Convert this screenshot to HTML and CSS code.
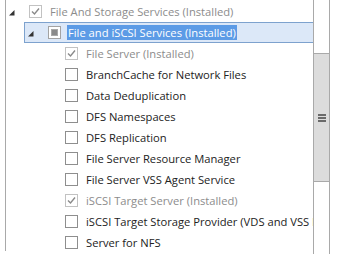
FILE: index.html
```html
<!doctype html>
<html lang="en">
  <head>
    <meta charset="UTF-8" />
    <title>Roles</title>
    <link rel="stylesheet" href="styles.css">
  </head>
  <body>
    <div class="panel">
      <div class="tree">
        <div class="row level-0">
          <span class="arrow"><svg width="6" height="6" viewBox="0 0 6 6"><polygon points="5.5,0 5.5,5.5 0,5.5" /></svg></span>
          <span class="box checked disabled"><svg width="11" height="11" viewBox="0 0 11 11"><polyline points="2,5.5 4.5,8 9,2.5" /></svg></span>
          <span class="label dim">File And Storage Services (Installed)</span>
        </div>
        <div class="row level-1 selected">
          <span class="arrow"><svg width="6" height="6" viewBox="0 0 6 6"><polygon points="5.5,0 5.5,5.5 0,5.5" /></svg></span>
          <span class="box mixed"><span class="fill"></span></span>
          <span class="label"><span class="highlight">File and iSCSI Services (Installed)</span></span>
        </div>
        <div class="row level-2">
          <span class="arrow"></span>
          <span class="box checked disabled"><svg width="11" height="11" viewBox="0 0 11 11"><polyline points="2,5.5 4.5,8 9,2.5" /></svg></span>
          <span class="label dim">File Server (Installed)</span>
        </div>
        <div class="row level-2">
          <span class="arrow"></span>
          <span class="box"></span>
          <span class="label">BranchCache for Network Files</span>
        </div>
        <div class="row level-2">
          <span class="arrow"></span>
          <span class="box"></span>
          <span class="label">Data Deduplication</span>
        </div>
        <div class="row level-2">
          <span class="arrow"></span>
          <span class="box"></span>
          <span class="label">DFS Namespaces</span>
        </div>
        <div class="row level-2">
          <span class="arrow"></span>
          <span class="box"></span>
          <span class="label">DFS Replication</span>
        </div>
        <div class="row level-2">
          <span class="arrow"></span>
          <span class="box"></span>
          <span class="label">File Server Resource Manager</span>
        </div>
        <div class="row level-2">
          <span class="arrow"></span>
          <span class="box"></span>
          <span class="label">File Server VSS Agent Service</span>
        </div>
        <div class="row level-2">
          <span class="arrow"></span>
          <span class="box checked disabled"><svg width="11" height="11" viewBox="0 0 11 11"><polyline points="2,5.5 4.5,8 9,2.5" /></svg></span>
          <span class="label dim">iSCSI Target Server (Installed)</span>
        </div>
        <div class="row level-2">
          <span class="arrow"></span>
          <span class="box"></span>
          <span class="label">iSCSI Target Storage Provider (VDS and VSS hardware providers)</span>
        </div>
        <div class="row level-2">
          <span class="arrow"></span>
          <span class="box"></span>
          <span class="label">Server for NFS</span>
        </div>
      </div>
      <div class="scrollbar">
        <div class="thumb">
          <span class="grip"></span>
          <span class="grip"></span>
          <span class="grip"></span>
        </div>
      </div>
    </div>
  </body>
</html>
```

FILE: styles.css
```css
* {
  margin: 0;
  padding: 0;
  box-sizing: border-box;
}

body {
  font-family: "Open Sans", "Noto Sans", sans-serif;
  font-size: 11.2px;
  color: #222;
  background: #fff;
  width: 338px;
  height: 254px;
  overflow: hidden;
}

.panel {
  display: flex;
  align-items: flex-start;
  margin-left: 5px;
}

.tree {
  width: 308px;
  height: 251px;
  border-left: 1px solid #a9a9a9;
  padding-top: 1px;
  overflow: hidden;
  white-space: nowrap;
}

.row {
  display: flex;
  align-items: center;
  height: 21px;
  padding-left: 3px;
}

.level-1 {
  margin-left: 18px;
}

.level-2 {
  padding-left: 39px;
}

.selected {
  background: #dce8f8;
  border: 1px solid #7da2ce;
  border-right: none;
  padding-left: 3px;
}

.arrow {
  width: 20px;
  flex: none;
  display: flex;
  padding-top: 2px;
}

.arrow svg {
  fill: #333;
}

.box {
  width: 13px;
  height: 13px;
  flex: none;
  border: 1px solid #8e8e8e;
  background: #fff;
  display: flex;
  align-items: center;
  justify-content: center;
}

.box.disabled {
  border-color: #c2c2c2;
}

.box svg polyline {
  fill: none;
  stroke: #8a8a8a;
  stroke-width: 1.4;
}

.box.mixed {
  border-color: #a3a3a3;
}

.fill {
  width: 7px;
  height: 7px;
  background: #8a8a8a;
  border: 1px solid #a8a8a8;
}

.label {
  margin-left: 8px;
  line-height: 16px;
}

.dim {
  color: #8c8c8c;
}

.highlight {
  background: #5c9be6;
  color: #fff;
  padding: 0 1px;
  margin-left: -2px;
}

.scrollbar {
  width: 17px;
  height: 254px;
  border-left: 1px solid #a9a9a9;
  border-right: 1px solid #a9a9a9;
  padding-top: 53px;
}

.thumb {
  height: 129px;
  background: #dcdcdc;
  border-top: 1px solid #a9a9a9;
  border-bottom: 1px solid #a9a9a9;
  display: flex;
  flex-direction: column;
  align-items: center;
  justify-content: center;
  gap: 1px;
}

.grip {
  width: 8px;
  height: 2px;
  background: #6a6a6a;
}
```
